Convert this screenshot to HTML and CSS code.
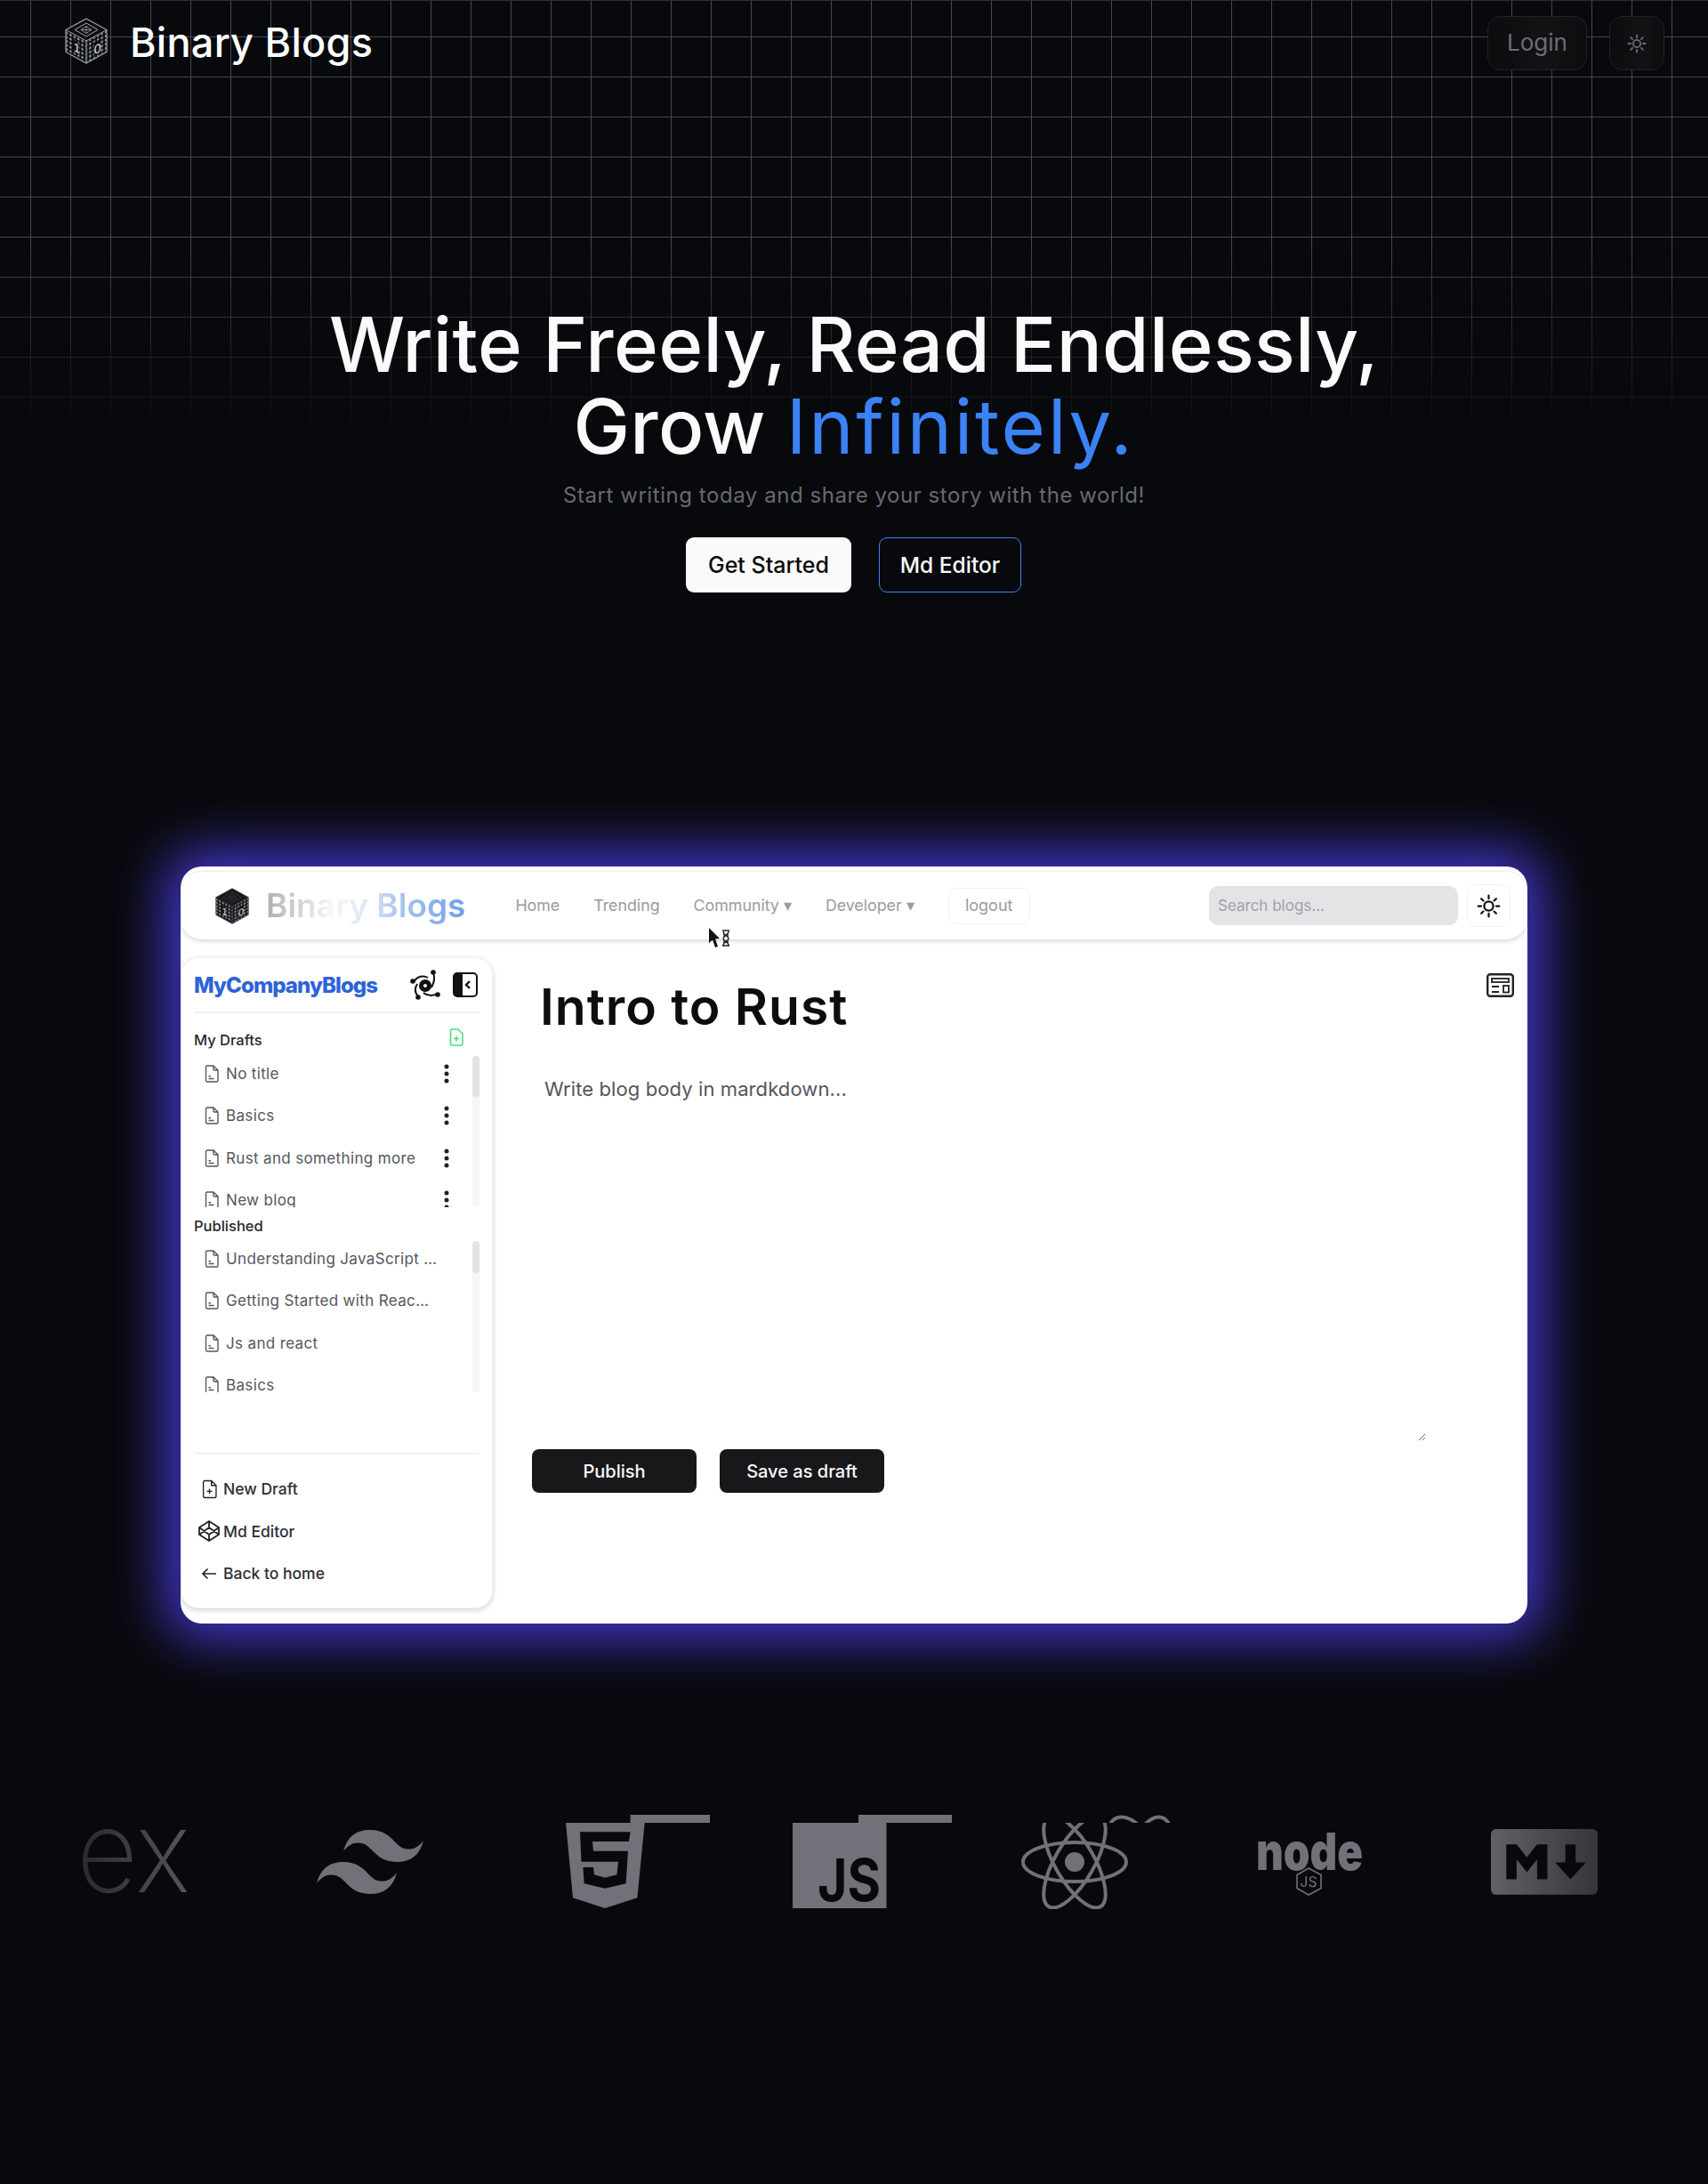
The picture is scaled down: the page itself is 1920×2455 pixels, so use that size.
FILE: index.html
```html
<!DOCTYPE html>
<html>
<head>
	<meta charset="utf-8">
	<title>Binary Blogs</title>
	<link rel="stylesheet" href="styles.css">
</head>
<body>
<svg class="defs" width="0" height="0">
	<defs>
		<pattern id="dots" width="4.4" height="4.6" patternUnits="userSpaceOnUse" patternTransform="skewY(27)">
			<rect x="1" y="1" width="2" height="2.6" fill="#a8a8ae"></rect>
		</pattern>
		<pattern id="dots2" width="4.4" height="4.6" patternUnits="userSpaceOnUse" patternTransform="skewY(-27)">
			<rect x="1" y="1" width="2" height="2.6" fill="#a8a8ae"></rect>
		</pattern>
		<symbol id="cube" viewBox="0 0 48 52">
			<polygon points="24,1 47,13.500 47,38.500 24,51 1,38.500 1,13.500" fill="var(--cube-fill)" stroke="var(--cube-line)" stroke-width="1.200"></polygon>
			<polygon points="1.500,14.500 23.500,26.500 23.500,50 1.500,38" fill="url(#dots)"></polygon>
			<polygon points="24.500,26.500 46.500,14.500 46.500,38 24.500,50" fill="url(#dots2)"></polygon>
			<path d="M1 13.500 24 26 47 13.500M24 26V51" fill="none" stroke="var(--cube-line)" stroke-width="1"></path>
			<polygon points="24,6 37,13.500 24,21 11,13.500" fill="none" stroke="var(--cube-line)" stroke-width="1"></polygon>
			<path d="M24 9.500 30 13.500 24 17.500 18 13.500zM18 13.500H30M24 9.500V17.500" fill="none" stroke="var(--cube-line)" stroke-width=".8"></path>
			<polygon points="8.500,24 15.500,28 15.500,42 8.500,38" fill="var(--cube-fill)"></polygon>
			<polygon points="32.500,28 40,24 40,38 32.500,42" fill="var(--cube-fill)"></polygon>
			<text class="cube-digit" transform="matrix(1 .5 0 1 9.500 37)">1</text>
			<text class="cube-digit" transform="matrix(1 -.5 0 1 32.800 41.500)">0</text>
		</symbol>
		<symbol id="sun" viewBox="0 0 24 24">
			<circle cx="12" cy="12" r="4.500" fill="none" stroke="currentColor" stroke-width="2"></circle>
			<path d="M12 1.500v3M12 19.500v3M1.500 12h3M19.500 12h3M4.600 4.600l2 2M17.400 17.400l2 2M4.600 19.400l2-2M17.400 6.600l2-2" fill="none" stroke="currentColor" stroke-width="2" stroke-linecap="round"></path>
		</symbol>
		<symbol id="file" viewBox="0 0 16 20">
			<path d="M3 1h7l5 5v11.500a1.500 1.500 0 0 1-1.500 1.500h-10.500a1.500 1.500 0 0 1-1.500-1.500v-15a1.500 1.500 0 0 1 1.500-1.500zM10 1v4a1 1 0 0 0 1 1h4M4.500 15.500h6M4.500 12.800h2.500" fill="none" stroke="currentColor" stroke-width="1.400" stroke-linejoin="round"></path>
		</symbol>
		<symbol id="kebab" viewBox="0 0 6 22">
			<circle cx="3" cy="3" r="2.500" fill="currentColor"></circle>
			<circle cx="3" cy="11" r="2.500" fill="currentColor"></circle>
			<circle cx="3" cy="19" r="2.500" fill="currentColor"></circle>
		</symbol>
	</defs>
</svg>

<div class="grid-bg"></div>

<div class="page">
	<header class="topbar">
		<a class="brand">
			<svg class="brand-cube" width="48" height="52"><use href="#cube"></use></svg>
			<span class="brand-name">Binary Blogs</span>
		</a>
		<div class="top-actions">
			<button class="ghost login">Login</button>
			<button class="ghost theme"><svg width="22" height="22"><use href="#sun"></use></svg></button>
		</div>
	</header>

	<section class="hero">
		<h1>Write Freely, Read Endlessly,<br>Grow <span class="accent">Infinitely.</span></h1>
		<p class="tagline">Start writing today and share your story with the world!</p>
		<div class="cta">
			<button class="cta-primary">Get Started</button>
			<button class="cta-outline">Md Editor</button>
		</div>
	</section>

	<section class="preview">
		<nav class="app-nav">
			<svg class="app-cube" width="38" height="41"><use href="#cube"></use></svg>
			<span class="app-name">Binary Blogs</span>
			<ul class="app-links">
				<li>Home</li>
				<li>Trending</li>
				<li>Community ▾</li>
				<li>Developer ▾</li>
			</ul>
			<button class="logout">logout</button>
			<input class="search" type="text" placeholder="Search blogs...">
			<button class="app-theme"><svg width="27" height="27"><use href="#sun"></use></svg></button>
		</nav>

		<svg class="cursor" width="26" height="24" viewBox="0 0 26 24">
			<path d="M1 0 1 17 5 13.500 8 22 11 21 8 12.500 13 12z" fill="#111"></path>
			<path d="M16 3h8M16 20h8M17 4c0 4 6 5 6 8s-6 3-6 8M23 4c0 4-6 5-6 8s6 3 6 8" fill="#666" stroke="#222" stroke-width="1.500"></path>
		</svg>

		<div class="app-body">
			<aside class="sidebar">
				<div class="side-head">
					<span class="company">MyCompanyBlogs</span>
					<svg class="orbit" width="34" height="34" viewBox="0 0 34 34">
						<circle cx="17" cy="18" r="7" fill="#111"></circle>
						<circle cx="17" cy="18" r="2" fill="#fff"></circle>
						<path d="M4 14C8 7 15 6 20 9M26 3C28 9 27 15 24 20M31 28C25 29 20 30 15 26M9 30C5 26 5 21 8 16" fill="none" stroke="#111" stroke-width="2"></path>
						<circle cx="26" cy="3" r="2.800" fill="#111"></circle>
						<circle cx="3" cy="13" r="2.800" fill="#111"></circle>
						<circle cx="31" cy="28" r="2.800" fill="#111"></circle>
						<circle cx="9" cy="31" r="2.800" fill="#111"></circle>
					</svg>
					<svg class="collapse" width="28" height="28" viewBox="0 0 28 28">
						<rect x="1" y="1" width="26" height="26" rx="4" fill="#fff" stroke="#111" stroke-width="2"></rect>
						<path d="M5 1h6v26H5a4 4 0 0 1-4-4V5a4 4 0 0 1 4-4z" fill="#111"></path>
						<path d="M19 10l-4 4 4 4" fill="none" stroke="#111" stroke-width="2.400"></path>
					</svg>
				</div>

				<div class="section-title drafts-title">
					<span>My Drafts</span>
					<svg class="add-draft" width="16" height="20" viewBox="0 0 16 20">
						<path d="M3 1h7l5 5v11.500a1.500 1.500 0 0 1-1.500 1.500h-10.500a1.500 1.500 0 0 1-1.500-1.500v-15a1.500 1.500 0 0 1 1.500-1.500zM8 8.500v6M5 11.500h6" fill="none" stroke="#4ade80" stroke-width="1.600"></path>
					</svg>
				</div>
				<div class="list-wrap">
					<ul class="doc-list">
						<li><svg width="16" height="20"><use href="#file"></use></svg><span>No title</span><svg class="more" width="6" height="22"><use href="#kebab"></use></svg></li>
						<li><svg width="16" height="20"><use href="#file"></use></svg><span>Basics</span><svg class="more" width="6" height="22"><use href="#kebab"></use></svg></li>
						<li><svg width="16" height="20"><use href="#file"></use></svg><span>Rust and something more</span><svg class="more" width="6" height="22"><use href="#kebab"></use></svg></li>
						<li><svg width="16" height="20"><use href="#file"></use></svg><span>New blog</span><svg class="more" width="6" height="22"><use href="#kebab"></use></svg></li>
					</ul>
					<div class="track"><div class="thumb thumb-drafts"></div></div>
				</div>

				<div class="section-title published-title"><span>Published</span></div>
				<div class="list-wrap">
					<ul class="doc-list">
						<li><svg width="16" height="20"><use href="#file"></use></svg><span>Understanding JavaScript …</span></li>
						<li><svg width="16" height="20"><use href="#file"></use></svg><span>Getting Started with Reac…</span></li>
						<li><svg width="16" height="20"><use href="#file"></use></svg><span>Js and react</span></li>
						<li><svg width="16" height="20"><use href="#file"></use></svg><span>Basics</span></li>
					</ul>
					<div class="track"><div class="thumb thumb-published"></div></div>
				</div>

				<ul class="side-links">
					<li>
						<span class="link-icon"><svg width="17" height="22" viewBox="0 0 16 20"><path d="M3 1h7l5 5v11.500a1.500 1.500 0 0 1-1.500 1.500h-10.500a1.500 1.500 0 0 1-1.500-1.500v-15a1.500 1.500 0 0 1 1.500-1.500zM10 1v5h5M8 9.500v5.500M5.200 12.200h5.600" fill="none" stroke="#222" stroke-width="1.300"></path></svg></span>
						New Draft
					</li>
					<li>
						<span class="link-icon"><svg width="24" height="24" viewBox="0 0 24 24"><path d="M12 1 23 8v8l-11 7-11-7V8zM12 1v7M12 16v7M1 8l11 8 11-8M1 16l11-8 11 8" fill="none" stroke="#222" stroke-width="1.800" stroke-linejoin="round"></path></svg></span>
						Md Editor
					</li>
					<li>
						<span class="link-icon"><svg width="18" height="14" viewBox="0 0 18 14"><path d="M17 7H2M7.500 1.500 2 7l5.500 5.500" fill="none" stroke="#222" stroke-width="1.600"></path></svg></span>
						Back to home
					</li>
				</ul>
			</aside>

			<div class="editor">
				<div class="editor-head">
					<h2>Intro to Rust</h2>
					<svg class="layout-icon" width="31" height="27" viewBox="0 0 31 27">
						<rect x="1.200" y="1.200" width="28.600" height="24.600" rx="3" fill="none" stroke="#222" stroke-width="2.400"></rect>
						<rect x="6" y="6" width="19" height="4" fill="none" stroke="#222" stroke-width="1.800"></rect>
						<rect x="19" y="14" width="6" height="7.500" fill="none" stroke="#222" stroke-width="1.800"></rect>
						<path d="M6 15h8M6 21h8" stroke="#222" stroke-width="2"></path>
					</svg>
				</div>
				<textarea class="body-input" placeholder="Write blog body in mardkdown..."></textarea>
				<div class="editor-actions">
					<button class="dark-btn">Publish</button>
					<button class="dark-btn">Save as draft</button>
				</div>
			</div>
		</div>
	</section>

	<section class="logos">
		<svg viewBox="0 0 120 106" width="120" height="106">
			<text class="logo-ex" x="-6" y="87" textLength="128" lengthAdjust="spacingAndGlyphs">ex</text>
		</svg>
		<svg viewBox="0 0 120 106" width="120" height="106">
			<g transform="translate(0 17) scale(2.222)">
				<path class="logo-fill" d="M27 0c-7.200 0-11.700 3.600-13.500 10.800 2.700-3.600 5.850-4.950 9.450-4.050 2.054.513 3.522 2.004 5.147 3.653C30.744 13.090 33.808 16.200 40.500 16.200c7.200 0 11.700-3.600 13.500-10.800-2.700 3.600-5.850 4.950-9.450 4.050-2.054-.513-3.522-2.004-5.147-3.653C36.756 3.110 33.692 0 27 0zM13.500 16.200C6.300 16.200 1.800 19.800 0 27c2.700-3.600 5.850-4.950 9.450-4.050 2.054.514 3.522 2.004 5.147 3.653C17.244 29.290 20.308 32.400 27 32.400c7.200 0 11.700-3.600 13.500-10.800-2.700 3.600-5.850 4.950-9.450 4.050-2.054-.513-3.522-2.004-5.147-3.653C23.256 19.310 20.192 16.200 13.500 16.200z"></path>
			</g>
		</svg>
		<svg viewBox="0 0 120 106" width="120" height="106">
			<polygon class="logo-fill" points="16,9 104.700,9 96.400,93.300 60,105 24,93.300"></polygon>
			<rect class="logo-fill" x="88.600" y="0" width="89.400" height="9"></rect>
			<polygon class="logo-cut" points="32,19.300 88.600,19.300 87,30 46,30 47,40.700 86,40.700 83.600,77.300 60,82.700 36.700,77.300 35.400,59 47,59 48,67.300 60,70.700 73.500,67.300 75,52.700 33.500,52.700"></polygon>
		</svg>
		<svg viewBox="0 0 120 106" width="120" height="106">
			<rect class="logo-fill" x="7" y="9" width="105.500" height="96"></rect>
			<rect class="logo-fill" x="81" y="0" width="105" height="9"></rect>
			<text class="logo-js" x="35" y="97" textLength="71" lengthAdjust="spacingAndGlyphs">JS</text>
		</svg>
		<svg viewBox="0 0 120 106" width="120" height="106">
			<defs>
				<clipPath id="react-clip"><rect x="-4" y="9" width="130" height="100"></rect></clipPath>
				<clipPath id="react-top"><rect x="90" y="-4" width="90" height="13"></rect></clipPath>
			</defs>
			<g class="logo-line" clip-path="url(#react-clip)">
				<ellipse cx="60" cy="53" rx="58" ry="22"></ellipse>
				<ellipse cx="60" cy="53" rx="58" ry="22" transform="rotate(60 60 53)"></ellipse>
				<ellipse cx="60" cy="53" rx="58" ry="22" transform="rotate(-60 60 53)"></ellipse>
			</g>
			<circle class="logo-fill" cx="60" cy="53" r="11"></circle>
			<g class="logo-line" clip-path="url(#react-top)">
				<path d="M100 10C106 0 118 0 130 10M140 10C150 0 160 0 166 10"></path>
			</g>
		</svg>
		<svg viewBox="0 0 120 106" width="120" height="106">
			<text class="logo-node" x="0" y="62" textLength="120" lengthAdjust="spacingAndGlyphs">node</text>
			<polygon class="logo-hex" points="59,60 73,67.500 73,82.500 59,90 46,82.500 46,67.500"></polygon>
			<text class="logo-nodejs" x="59" y="81">JS</text>
		</svg>
		<svg viewBox="0 0 120 106" width="120" height="106">
			<g transform="translate(0 16) scale(.577)">
				<rect class="logo-fill" width="208" height="128" rx="10"></rect>
				<path class="logo-cut" d="M30 98V30h20l20 25 20-25h20v68H90V59L70 84 50 59v39zm125 0l-30-33h20V30h20v35h20z"></path>
			</g>
		</svg>
	</section>
</div>
</body>
</html>
```

FILE: styles.css
```css
* {
	box-sizing: border-box;
}
html, body {
	margin: 0;
	padding: 0;
}
body {
	background: #08090c;
	color: #fff;
	font-family: Inter, "Liberation Sans", sans-serif;
	position: relative;
	overflow-x: hidden;
}
button, input, textarea {
	font-family: Inter, "Liberation Sans", sans-serif;
}
ul {
	list-style: none;
	margin: 0;
	padding: 0;
}
.defs {
	position: absolute;
}
.grid-bg {
	position: absolute;
	top: 0;
	left: 0;
	right: 0;
	height: 510px;
	border-top: 1px solid #2c2c31;
	background-image:
		linear-gradient(to right, #47474e 1px, transparent 1px),
		linear-gradient(to bottom, #47474e 1px, transparent 1px);
	background-size: 45px 45px;
	background-position: 34px 40px;
	-webkit-mask-image: linear-gradient(to bottom, #000 0, #000 270px, transparent 490px);
	mask-image: linear-gradient(to bottom, #000 0, #000 270px, transparent 490px);
}
.page {
	position: relative;
	min-height: 2455px;
}

/* top bar */
.topbar {
	height: 97px;
	padding: 18px 49px 0 73px;
	display: flex;
	justify-content: space-between;
	align-items: flex-start;
}
.brand {
	display: flex;
	align-items: center;
	gap: 25px;
}
.brand-cube {
	--cube-fill: #0d0e11;
	--cube-line: #a5a5aa;
}
.brand-name {
	font-size: 45px;
	line-height: 52px;
	font-weight: 500;
	color: #fff;
	letter-spacing: .3px;
	padding-top: 4px;
}
.cube-digit {
	font-size: 14px;
	font-weight: 400;
	fill: #e4e4e7;
	font-family: "Liberation Sans", sans-serif;
}
.top-actions {
	display: flex;
	gap: 25px;
}
.ghost {
	height: 61px;
	border: 1px solid #232326;
	border-radius: 15px;
	background: linear-gradient(90deg, #0c0c0f, #131315 60%, #0c0c0f);
	color: #6d6d74;
	padding: 0;
	display: flex;
	align-items: center;
	justify-content: center;
}
.login {
	width: 112px;
	font-size: 26px;
	padding-bottom: 3px;
}
.theme {
	width: 62px;
}

/* hero */
.hero {
	padding-top: 245px;
	text-align: center;
}
.hero h1 {
	margin: 0;
	font-size: 85px;
	line-height: 92px;
	font-weight: 500;
	color: #fafafa;
	letter-spacing: .3px;
}
.accent {
	color: #3b82f6;
	font-weight: 400;
	letter-spacing: 2.700px;
}
.tagline {
	margin: 13px 0 0;
	font-size: 24px;
	line-height: 36px;
	color: #696970;
	letter-spacing: .55px;
}
.cta {
	margin-top: 29px;
	display: flex;
	justify-content: center;
	gap: 31px;
	padding-right: 1px;
}
.cta button {
	height: 62px;
	font-size: 25px;
	font-weight: 500;
	border-radius: 9px;
	padding: 0;
}
.cta-primary {
	width: 186px;
	background: #fafafa;
	color: #09090b;
	border: none;
}
.cta .cta-outline {
	width: 160px;
	font-size: 24.500px;
	background: #08090c;
	color: #fafafa;
	border: 1px solid #3b82f6;
}

/* app preview */
.preview {
	position: relative;
	width: 1514px;
	height: 851px;
	margin: 308px 0 0 203px;
	background: #fff;
	border-radius: 24px;
	box-shadow: 0 0 60px 18px #4338ca;
	color: #111;
}
.app-nav {
	height: 77px;
	margin-top: 0;
	position: relative;
	top: 5px;
	display: flex;
	align-items: center;
	padding: 0 19px 0 39px;
	background: #fff;
	border-radius: 24px;
	box-shadow: 0 2px 5px rgba(0, 0, 0, .16);
	border-top: 1px solid #f0f0f2;
}
.app-cube {
	--cube-fill: #17171a;
	--cube-line: #3c3c42;
	flex: none;
}
.app-name {
	margin-left: 19px;
	font-size: 37px;
	font-weight: 600;
	line-height: 44px;
	background: linear-gradient(90deg, #b0b0b0 0, #f6f6f6 33%, #dbe6f8 50%, #a8c4f0 68%, #6e9fe8 100%);
	-webkit-background-clip: text;
	background-clip: text;
	color: transparent;
}
.app-links {
	display: flex;
	gap: 38px;
	margin-left: 56px;
	padding-bottom: 2px;
	font-size: 17.800px;
	color: #9a9aa2;
}
.logout {
	margin-left: 38px;
	width: 92px;
	height: 41px;
	background: #fff;
	border: 1px solid #f0f0f2;
	border-radius: 10px;
	font-size: 18px;
	color: #9a9aa2;
	padding: 0 0 2px;
}
.search {
	margin-left: auto;
	width: 280px;
	height: 44px;
	border: none;
	outline: none;
	background: #e4e4e7;
	border-radius: 10px;
	padding: 0 10px;
	font-size: 17px;
}
.search::placeholder {
	color: #a1a1aa;
}
.app-theme {
	margin-left: 10px;
	width: 49px;
	height: 48px;
	border: 1px solid #f0f0f2;
	border-radius: 10px;
	background: #fff;
	color: #111;
	padding: 0;
	display: flex;
	align-items: center;
	justify-content: center;
}
.cursor {
	position: absolute;
	left: 593px;
	top: 69px;
}
.app-body {
	display: flex;
	margin-top: 25px;
}

/* sidebar */
.sidebar {
	width: 351px;
	height: 732px;
	flex: none;
	margin-top: 0;
	border: 1px solid #f2f2f4;
	border-radius: 20px;
	box-shadow: 0 2px 6px rgba(0, 0, 0, .18);
	padding: 0 14px;
	background: #fff;
}
.side-head {
	height: 62px;
	display: flex;
	align-items: center;
	border-bottom: 2px solid #f0f0f2;
}
.company {
	font-size: 24px;
	font-weight: 800;
	color: #2d63d8;
	letter-spacing: -.9px;
	width: 243px;
	flex: none;
}
.collapse {
	margin-left: 14px;
}
.section-title {
	display: flex;
	justify-content: space-between;
	align-items: center;
	font-size: 16.500px;
	font-weight: 500;
	color: #27272a;
}
.drafts-title {
	height: 48px;
	padding: 6px 18px 0 0;
}
.drafts-title span {
	padding-top: 6px;
}
.published-title {
	height: 38px;
	padding-top: 3px;
}
.list-wrap {
	display: flex;
	height: 170px;
}
.doc-list {
	flex: 1;
	overflow: hidden;
	padding: 0 26px 0 12px;
}
.doc-list li {
	height: 40px;
	margin-bottom: 7.400px;
	display: flex;
	align-items: center;
	gap: 8px;
	font-size: 17px;
	letter-spacing: .35px;
	color: #56565c;
	white-space: nowrap;
}
.more {
	margin-left: auto;
	color: #222;
}
.track {
	width: 8px;
	background: #f6f6f7;
	border-radius: 4px;
	flex: none;
}
.thumb {
	background: #e3e3e5;
	border-radius: 4px;
}
.thumb-drafts {
	height: 46px;
}
.thumb-published {
	height: 36px;
}
.side-links {
	margin-top: 68px;
	border-top: 1px solid #e7e7e9;
	padding-top: 16px;
}
.side-links li {
	height: 47.500px;
	display: flex;
	align-items: center;
	gap: 3px;
	font-size: 17.500px;
	font-weight: 500;
	color: #2e2e33;
}
.link-icon {
	width: 26px;
	margin-left: 4px;
	display: flex;
	justify-content: center;
	flex: none;
}

/* editor */
.editor {
	flex: 1;
	padding: 0 15px 0 44px;
}
.editor-head {
	height: 118px;
	padding-left: 9px;
	display: flex;
	justify-content: space-between;
	align-items: flex-start;
}
.editor-head h2 {
	margin: 23px 0 0;
	font-size: 57px;
	line-height: 66px;
	font-weight: 600;
	letter-spacing: 1px;
	color: #0d0d0f;
}
.layout-icon {
	margin-top: 18px;
}
.body-input {
	display: block;
	width: 1005px;
	height: 426px;
	border: none;
	outline: none;
	background: transparent;
	padding: 15px 14px;
	font-size: 22px;
	line-height: 30px;
	letter-spacing: .1px;
	color: #444;
}
.body-input::placeholder {
	color: #55555b;
}
.editor-actions {
	margin-top: 9px;
	display: flex;
	gap: 26px;
}
.dark-btn {
	width: 185px;
	height: 49px;
	border: none;
	border-radius: 8px;
	background: #18181b;
	color: #fafafa;
	font-size: 20px;
	font-weight: 500;
	padding: 0;
}

/* logo strip */
.logos {
	margin-top: 215px;
	display: grid;
	grid-template-columns: repeat(7, 120px);
	column-gap: 144px;
	padding-left: 92px;
	-webkit-mask-image: linear-gradient(to right, transparent 0, #000 288px, #000 1632px, transparent 1920px);
	mask-image: linear-gradient(to right, transparent 0, #000 288px, #000 1632px, transparent 1920px);
}
.logos svg {
	overflow: visible;
	display: block;
}
.logo-fill {
	fill: #71717a;
}
.logo-cut {
	fill: #08090c;
}
.logo-line {
	fill: none;
	stroke: #71717a;
	stroke-width: 4;
}
.logo-ex {
	font-size: 128px;
	font-weight: 200;
	fill: #71717a;
}
.logo-js {
	font-size: 66px;
	font-weight: 700;
	fill: #08090c;
}
.logo-node {
	font-size: 58px;
	font-weight: 900;
	fill: #71717a;
}
.logo-hex {
	fill: none;
	stroke: #71717a;
	stroke-width: 1.600;
}
.logo-nodejs {
	font-size: 16px;
	fill: #71717a;
	text-anchor: middle;
}
```
